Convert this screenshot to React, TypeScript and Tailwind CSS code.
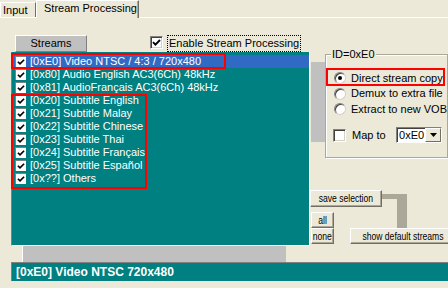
import React from "react";

const streams = [
  "[0xE0] Video NTSC / 4:3 / 720x480",
  "[0x80] Audio English AC3(6Ch) 48kHz",
  "[0x81] AudioFrançais AC3(6Ch) 48kHz",
  "[0x20] Subtitle English",
  "[0x21] Subtitle Malay",
  "[0x22] Subtitle Chinese",
  "[0x23] Subtitle Thai",
  "[0x24] Subtitle Français",
  "[0x25] Subtitle Español",
  "[0x??] Others",
];

function CheckMark({ size = 9 }: { size?: number }) {
  return (
    <svg width={size} height={size} viewBox="0 0 9 9">
      <path d="M1 4.2 L3.4 6.6 L8 2" fill="none" stroke="#000" strokeWidth="1.9" />
    </svg>
  );
}

// sunken classic checkbox
function Checkbox({ checked }: { checked?: boolean }) {
  return (
    <div className="w-[13px] h-[13px] shrink-0 bg-white border border-t-[#808080] border-l-[#808080] border-b-white border-r-white shadow-[inset_1px_1px_0_#404040,inset_-1px_-1px_0_#D4D0C8] flex items-center justify-center">
      {checked && <CheckMark />}
    </div>
  );
}

function Radio({ checked }: { checked?: boolean }) {
  return (
    <div className="w-[12px] h-[12px] shrink-0 rounded-full bg-white border border-t-[#808080] border-l-[#808080] border-b-[#D4D0C8] border-r-[#D4D0C8] shadow-[inset_1px_1px_0_#404040] flex items-center justify-center">
      {checked && <div className="w-[4px] h-[4px] rounded-full bg-black" />}
    </div>
  );
}

function Button({ children, className = "" }: { children: React.ReactNode; className?: string }) {
  return (
    <div
      className={`bg-[#ECE9D8] border border-t-white border-l-white border-b-[#716F64] border-r-[#716F64] shadow-[inset_-1px_-1px_0_#ACA899] flex items-center justify-center text-[11px] whitespace-nowrap ${className}`}
    >
      <span className="inline-block scale-x-[0.78]">{children}</span>
    </div>
  );
}

export default function App() {
  return (
    <div className="w-[448px] h-[288px] bg-[#ECE9D8] overflow-hidden relative font-['Liberation_Sans',Arial,sans-serif] text-[11px] leading-none text-black">
      {/* Tabs */}
      <div className="h-[18px] flex items-end border-b border-white">
        <div className="w-[36px] h-[15px] border-t border-l border-r border-t-white border-l-white border-r-[#716F64] pl-[2px] flex items-center">
          Input
        </div>
        <div className="w-[103px] h-[18px] -mb-px relative z-10 bg-[#ECE9D8] border-t border-l border-r border-t-white border-l-white border-r-[#716F64] shadow-[inset_-1px_0_0_#ACA899] pl-[7px] pb-[3px] flex items-center whitespace-nowrap">
          Stream Processing
        </div>
      </div>

      {/* Body */}
      <div className="h-[244px] flex">
        {/* Left: streams list */}
        <div className="ml-[11px] w-[299px] flex flex-col">
          <div className="mt-[17px] h-[17px] flex items-start">
            <div className="ml-[4px] w-[72px] h-[17px] bg-[#C0C0C0] border border-t-white border-l-white border-b-[#808080] border-r-[#808080] flex items-center justify-center">
              Streams
            </div>
            <div className="ml-[63px] mt-[1px]">
              <Checkbox checked />
            </div>
            <div className="ml-[4px] h-[17px] px-[1px] border border-dotted border-black flex items-center whitespace-nowrap">
              Enable Stream Processing
            </div>
          </div>

          <div className="h-[194px] bg-[#008080] border-l border-r border-b border-l-[#808080] border-r-white border-b-white pt-[3px] flex flex-col">
            {streams.map((s, i) => (
              <div
                key={s}
                className={`h-[13px] flex items-center pl-[3px] ${i === 0 ? "bg-[#316AC5]" : ""}`}
              >
                <div className="w-[11px] h-[11px] bg-white border-t border-l border-[#808080] flex items-center justify-center">
                  <CheckMark size={8} />
                </div>
                <span className="ml-[4px] text-white whitespace-nowrap">{s}</span>
              </div>
            ))}
          </div>

          <div className="ml-[11px] w-[264px] h-[16px] bg-[#C0C0C0] border-l border-white" />
        </div>

        {/* Right: options */}
        <div className="w-[138px] flex flex-col">
          <div className="h-[140px] flex items-start">
            <div className="ml-px mt-[44px] w-[15px] h-[80px] bg-[#C0C0C0]" />
            <div className="mt-[36px] w-[130px] h-[104px] relative border border-[#ACA899] shadow-[inset_1px_1px_0_#fff,1px_1px_0_#fff] pt-[15px] pl-[8px] flex flex-col">
              <span className="absolute -top-[6px] left-[5px] px-px bg-[#ECE9D8]">ID=0xE0</span>
              <div className="h-[16px] flex items-center gap-[5px] whitespace-nowrap">
                <Radio checked />
                Direct stream copy
              </div>
              <div className="h-[15px] flex items-center gap-[5px] whitespace-nowrap">
                <Radio />
                Demux to extra file
              </div>
              <div className="h-[16px] flex items-center gap-[5px] whitespace-nowrap">
                <Radio />
                Extract to new VOB
              </div>
              <div className="mt-[10px] h-[16px] flex items-center -ml-px">
                <Checkbox />
                <span className="ml-[6px] w-[44px]">Map to</span>
                <div className="w-[46px] h-[16px] bg-white border border-t-[#808080] border-l-[#808080] border-b-white border-r-white shadow-[inset_1px_1px_0_#404040] flex items-center">
                  <span className="ml-[2px] flex-1">0xE0</span>
                  <div className="w-[16px] h-[14px] bg-[#ECE9D8] border border-t-white border-l-white border-b-[#716F64] border-r-[#716F64] flex items-center justify-center">
                    <svg width="7" height="4" viewBox="0 0 7 4">
                      <path d="M0 0 H7 L3.5 4 Z" fill="#000" />
                    </svg>
                  </div>
                </div>
              </div>
            </div>
          </div>

          {/* Buttons */}
          <div className="mt-[32px] relative flex flex-col">
            <div className="absolute left-[72px] top-[4px] w-[25px] h-[5px] bg-[#ACA899]" />
            <div className="absolute left-[87px] top-[4px] w-[10px] h-[34px] bg-[#ACA899]" />
            <Button className="w-[72px] h-[17px] relative">save selection</Button>
            <div className="mt-[5px] flex items-start">
              <div className="ml-px flex flex-col">
                <Button className="w-[23px] h-[16px]">all</Button>
                <Button className="w-[23px] h-[16px]">none</Button>
              </div>
              <Button className="ml-[16px] mt-[16px] w-[105px] h-[16px] relative justify-start pl-[0px]">show default streams</Button>
            </div>
          </div>
        </div>
      </div>

      {/* Status */}
      <div className="ml-[11px] h-[19px] bg-[#008080] border-t border-l border-[#808080] pl-[4px] flex items-center text-white font-bold text-[12px] whitespace-nowrap">
        [0xE0] Video NTSC 720x480
      </div>

      {/* Annotation boxes */}
      <div className="absolute left-[11px] top-[53px] w-[215px] h-[16px] border-2 border-[#F00] pointer-events-none" />
      <div className="absolute left-[11px] top-[94px] w-[136px] h-[95px] border-2 border-[#F00] pointer-events-none" />
      <div className="absolute left-[326px] top-[68px] w-[119px] h-[18px] border-2 border-[#F00] pointer-events-none" />
    </div>
  );
}
